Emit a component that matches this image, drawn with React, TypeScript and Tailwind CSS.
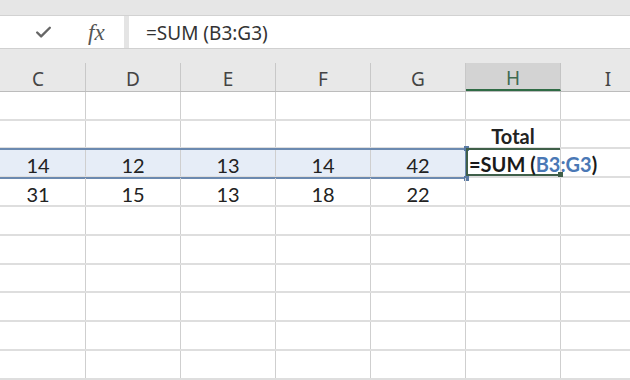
import { Check } from "lucide-react";

const cols = ["C", "D", "E", "F", "G", "H", "I"];

const rows: { h: string; cells: string[] }[] = [
    { h: "h-[29px]", cells: ["", "", "", "", "", "", ""] },
    { h: "h-[28px]", cells: ["", "", "", "", "", "Total", ""] },
    { h: "h-[29px]", cells: ["14", "12", "13", "14", "42", "", ""] },
    { h: "h-[29px]", cells: ["31", "15", "13", "18", "22", "", ""] },
    { h: "h-[29px]", cells: ["", "", "", "", "", "", ""] },
    { h: "h-[29px]", cells: ["", "", "", "", "", "", ""] },
    { h: "h-[28px]", cells: ["", "", "", "", "", "", ""] },
    { h: "h-[29px]", cells: ["", "", "", "", "", "", ""] },
    { h: "h-[29px]", cells: ["", "", "", "", "", "", ""] },
    { h: "h-[29px]", cells: ["", "", "", "", "", "", ""] },
];

const FormulaCell = () => (
    <div className="absolute inset-0 -top-[1px] border-y-2 border-l-2 border-[#3f5f49] flex items-center pl-[1px] pt-[3px] whitespace-nowrap font-bold z-10">
        <span className="text-[#1a1a1a]">=SUM (</span>
        <span className="text-[#4a78b5]">B3:G3</span>
        <span className="text-[#1a1a1a]">)</span>
        <div className="absolute -right-[3px] -bottom-[3px] w-[5px] h-[5px] bg-[#3f5f49]" />
    </div>
);

const App = () => {
    return (
        <div className="w-[630px] h-[380px] overflow-hidden bg-white flex flex-col" style={{ fontFamily: "Lato, 'Noto Sans', sans-serif" }}>
            {/* ribbon edge */}
            <div className="h-[16px] flex-none bg-[#e6e6e6] border-b border-[#d2d2d2]" />

            {/* formula bar */}
            <div className="h-[33px] flex-none flex border-b border-[#d0d0d0]">
                <div className="w-[124px] bg-white flex items-center">
                    <Check className="ml-[34px] w-[19px] h-[19px] text-[#666]" strokeWidth={3} />
                    <span className="ml-[35px] text-[23px] italic text-[#555] leading-none" style={{ fontFamily: "'Liberation Serif', serif" }}>fx</span>
                </div>
                <div className="w-[5px] bg-[#e4e4e4]" />
                <div className="flex-1 bg-white flex items-center pl-[17px] pt-[3px] text-[19px] text-[#333]" style={{ fontFamily: "'Noto Sans', sans-serif" }}>
                    =SUM (B3:G3)
                </div>
            </div>

            {/* column headers */}
            <div className="flex-none bg-[#e8e8e8] pt-[14px] border-b border-[#bcbcbc]">
                <div className="flex -ml-[9px] h-[28px]" style={{ fontFamily: "'Noto Sans', sans-serif" }}>
                    {cols.map((c) => (
                        <div
                            key={c}
                            className={
                                c === "H"
                                    ? "w-[95px] flex-none flex items-center justify-center pt-[4px] text-[19px] text-[#3f6a50] bg-[#d3d3d3] border-r border-[#c4c4c4] border-b-2 border-b-[#2f6b45]"
                                    : "w-[95px] flex-none flex items-center justify-center pt-[4px] text-[19px] text-[#444] border-r border-[#c8c8c8]"
                            }
                        >
                            {c}
                        </div>
                    ))}
                </div>
            </div>

            {/* grid */}
            <div className="flex-1 flex flex-col -ml-[9px]">
                {rows.map((r, ri) => (
                    <div key={ri} className={`${r.h} flex-none flex relative border-b-2 border-[#dedede]`}>
                        {r.cells.map((v, ci) => (
                            <div
                                key={ci}
                                className={`w-[95px] flex-none relative flex items-center justify-center pt-[4px] text-[20px] text-[#222] border-r border-[#cfcfcf] ${ri === 2 && ci < 5 ? "bg-[#e6edf7]" : ""} ${ri === 1 && ci === 5 ? "font-bold" : ""}`}
                            >
                                {v}
                                {ri === 2 && ci === 5 && <FormulaCell />}
                            </div>
                        ))}
                        {ri === 2 && (
                            <div className="absolute left-0 -top-[1px] w-[476px] h-[31px] border-y-2 border-r-2 border-[#6c8ab0] pointer-events-none">
                                <div className="absolute -right-[4px] -top-[4px] w-[5px] h-[5px] bg-[#5a7aa3]" />
                                <div className="absolute -right-[4px] -bottom-[4px] w-[5px] h-[5px] bg-[#5a7aa3]" />
                            </div>
                        )}
                    </div>
                ))}
            </div>
        </div>
    );
};

export default App;
